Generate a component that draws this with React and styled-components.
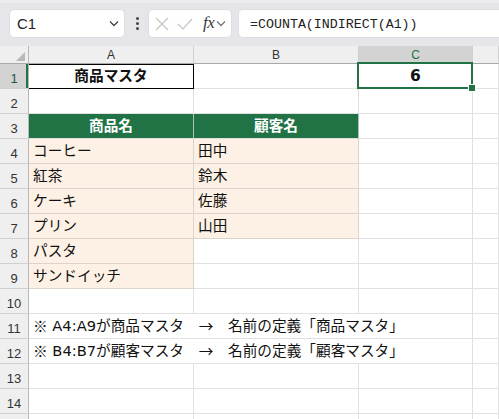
import React from "react";
import styled, { createGlobalStyle, css } from "styled-components";

const GREEN = "#217346";
const PEACH = "#fdf1e5";
const GRID = "#e1e1e1";
const PEACH_GRID = "#dcd4cc";

const GlobalStyle = createGlobalStyle`
  html, body { margin: 0; padding: 0; background: #fff; }
  body { overflow: hidden; }
`;

const Screen = styled.div`
  width: 499px;
  height: 419px;
  overflow: hidden;
  background: #fff;
  font-family: "DejaVu Sans", "Noto Sans CJK JP", sans-serif;
`;

const Toolbar = styled.div`
  height: 46px;
  box-sizing: border-box;
  background: #e6e6ea;
  border-top: 3px solid #ececef;
  display: flex;
  align-items: flex-start;
  padding: 6px 0 0 9px;
`;

const Box = styled.div`
  height: 29px;
  box-sizing: border-box;
  background: #fff;
  border: 1px solid #dedee2;
  border-radius: 5px;
  display: flex;
  align-items: center;
`;

const NameBox = styled(Box)`
  width: 116px;
  justify-content: space-between;
  padding: 0 5px 0 7px;
  font-family: "Liberation Sans", Arial, sans-serif;
  font-size: 15px;
  color: #222;
`;

const Grip = styled.div`
  width: 3px;
  height: 29px;
  margin: 0 9px 0 11px;
  display: flex;
  flex-direction: column;
  justify-content: center;
  gap: 2px;
  & > span {
    width: 3px;
    height: 3px;
    border-radius: 50%;
    background: #444;
  }
`;

const FxBox = styled(Box)`
  width: 84px;
  padding: 0 0 0 5px;
`;

const FxLabel = styled.span`
  font-family: "Liberation Serif", serif;
  font-style: italic;
  font-size: 17px;
  color: #3a3a3a;
  margin: 0 2px 2px 9px;
  letter-spacing: -0.5px;
`;

const FormulaBox = styled(Box)`
  flex: 1;
  margin-left: 6px;
  border-radius: 5px 0 0 5px;
  border-right: none;
  padding: 1px 0 0 11px;
  font-family: "Liberation Mono", monospace;
  font-size: 13.3px;
  color: #222;
`;

const Sheet = styled.div`
  display: grid;
  grid-template-columns: 29px 165px 165px 114px 1fr;
  grid-template-rows: 18px;
  grid-auto-rows: 25px;
`;

const Corner = styled.div`
  background: #efefef;
  border-right: 1px solid #b8b8b8;
  border-bottom: 1px solid #a8a8a8;
  position: relative;
  &::after {
    content: "";
    position: absolute;
    right: 3px;
    bottom: 2px;
    width: 0;
    height: 0;
    border-left: 9px solid transparent;
    border-bottom: 9px solid #b8b8b8;
  }
`;

const ColHead = styled.div`
  background: ${(p) => (p.$active ? "#d3d3d3" : "#efefef")};
  color: ${(p) => (p.$active ? GREEN : "#333")};
  border-right: 1px solid #d0d0d0;
  border-bottom: 1px solid #a8a8a8;
  display: flex;
  align-items: flex-end;
  justify-content: center;
  padding-bottom: 1px;
  box-sizing: border-box;
  font-family: "Liberation Sans", Arial, sans-serif;
  font-size: 12px;
  line-height: 14px;
`;

const RowHead = styled.div`
  background: ${(p) => (p.$active ? "#d3d3d3" : "#efefef")};
  color: ${(p) => (p.$active ? "#1d5a38" : "#333")};
  border-right: 1px solid #b8b8b8;
  border-bottom: 1px solid #d0d0d0;
  ${(p) => p.$active && css`box-shadow: inset -2px 0 0 ${GREEN};`}
  display: flex;
  align-items: flex-end;
  justify-content: center;
  padding-bottom: 2px;
  box-sizing: border-box;
  overflow: hidden;
  font-family: "Liberation Sans", Arial, sans-serif;
  font-size: 13px;
  line-height: 14px;
`;

const kinds = {
  plain: css`
    background: #fff;
    border-right: 1px solid ${GRID};
    border-bottom: 1px solid ${GRID};
  `,
  peach: css`
    background: ${PEACH};
    border-right: 1px solid ${PEACH_GRID};
    border-bottom: 1px solid ${PEACH_GRID};
  `,
  head: css`
    background: ${GREEN};
    font-weight: 700;
    justify-content: center;
    border-right: 1px solid #a9c2b3;
    border-bottom: 1px solid ${GRID};
  `,
  boxed: css`
    background: #fff;
    border-right: 1px solid #000;
    border-bottom: 1px solid #000;
    box-shadow: inset 0 1px 0 #000;
    font-weight: 700;
    justify-content: center;
  `,
  result: css`
    background: #fff;
    border-right: 1px solid ${GRID};
    border-bottom: 1px solid ${GRID};
    font-weight: 700;
    font-size: 15.5px;
    justify-content: center;
    position: relative;
  `,
};

const Cell = styled.div`
  font-size: 14.67px;
  ${(p) => kinds[p.$kind || "plain"]}
  ${(p) => p.$span && css`grid-column: span ${p.$span};`}
  box-sizing: border-box;
  display: flex;
  align-items: center;
  padding: 0 4px 1px 4px;
  line-height: 18px;
  color: ${(p) => (p.$kind === "head" ? "#fff" : "#111")};
  white-space: nowrap;
`;

const Mark = styled.span`
  font-family: "Noto Sans CJK JP", sans-serif;
`;

const Selection = styled.div`
  position: absolute;
  top: -2px;
  left: -2px;
  right: -1px;
  bottom: -1px;
  border: 2px solid ${GREEN};
  pointer-events: none;
  z-index: 2;
`;

const Handle = styled.div`
  position: absolute;
  right: -5px;
  bottom: -5px;
  width: 6px;
  height: 6px;
  background: ${GREEN};
  border: 1px solid #fff;
`;

const Chevron = ({ color = "#444" }) => (
  <svg width="10" height="7" viewBox="0 0 10 7">
    <path d="M1 1.5 L5 5.5 L9 1.5" fill="none" stroke={color} strokeWidth="1.3" />
  </svg>
);

const Cross = () => (
  <svg width="16" height="16" viewBox="0 0 16 16">
    <path d="M2 2 L14 14 M14 2 L2 14" stroke="#c4c4c4" strokeWidth="1.2" fill="none" />
  </svg>
);

const Check = () => (
  <svg width="18" height="16" viewBox="0 0 18 16" style={{ marginLeft: 6 }}>
    <path d="M2 8 L7 13 L16 3" stroke="#c4c4c4" strokeWidth="1.2" fill="none" />
  </svg>
);

const Note = ({ range, name }) => (
  <>
    <Mark>※</Mark>&nbsp;{range}が{name}マスタ<Mark>　→　</Mark>名前の定義「{name}マスタ」
  </>
);

const rows = [
  { a: { t: "商品マスタ", k: "boxed" }, b: {}, c: { t: "6", k: "result", sel: true } },
  {},
  { a: { t: "商品名", k: "head" }, b: { t: "顧客名", k: "head" } },
  { a: { t: "コーヒー", k: "peach" }, b: { t: "田中", k: "peach" } },
  { a: { t: "紅茶", k: "peach" }, b: { t: "鈴木", k: "peach" } },
  { a: { t: "ケーキ", k: "peach" }, b: { t: "佐藤", k: "peach" } },
  { a: { t: "プリン", k: "peach" }, b: { t: "山田", k: "peach" } },
  { a: { t: "パスタ", k: "peach" }, b: {} },
  { a: { t: "サンドイッチ", k: "peach" }, b: {} },
  {},
  { span: <Note range="A4:A9" name="商品" /> },
  { span: <Note range="B4:B7" name="顧客" /> },
  {},
  {},
  { partial: true },
];

export default function App() {
  return (
    <Screen>
      <GlobalStyle />
      <Toolbar>
        <NameBox>
          <span>C1</span>
          <Chevron />
        </NameBox>
        <Grip>
          <span />
          <span />
          <span />
        </Grip>
        <FxBox>
          <Cross />
          <Check />
          <FxLabel>fx</FxLabel>
          <Chevron color="#777" />
        </FxBox>
        <FormulaBox>=COUNTA(INDIRECT(A1))</FormulaBox>
      </Toolbar>
      <Sheet>
        <Corner />
        <ColHead>A</ColHead>
        <ColHead>B</ColHead>
        <ColHead $active>C</ColHead>
        <ColHead />
        {rows.map((r, i) => (
          <React.Fragment key={i}>
            <RowHead $active={i === 0}>{r.partial ? null : i + 1}</RowHead>
            {r.span ? (
              <Cell $span={3}>{r.span}</Cell>
            ) : (
              <>
                <Cell $kind={r.a?.k}>{r.a?.t}</Cell>
                <Cell $kind={r.b?.k}>{r.b?.t}</Cell>
                <Cell $kind={r.c?.k}>
                  {r.c?.t}
                  {r.c?.sel && (
                    <Selection>
                      <Handle />
                    </Selection>
                  )}
                </Cell>
              </>
            )}
            <Cell />
          </React.Fragment>
        ))}
      </Sheet>
    </Screen>
  );
}
